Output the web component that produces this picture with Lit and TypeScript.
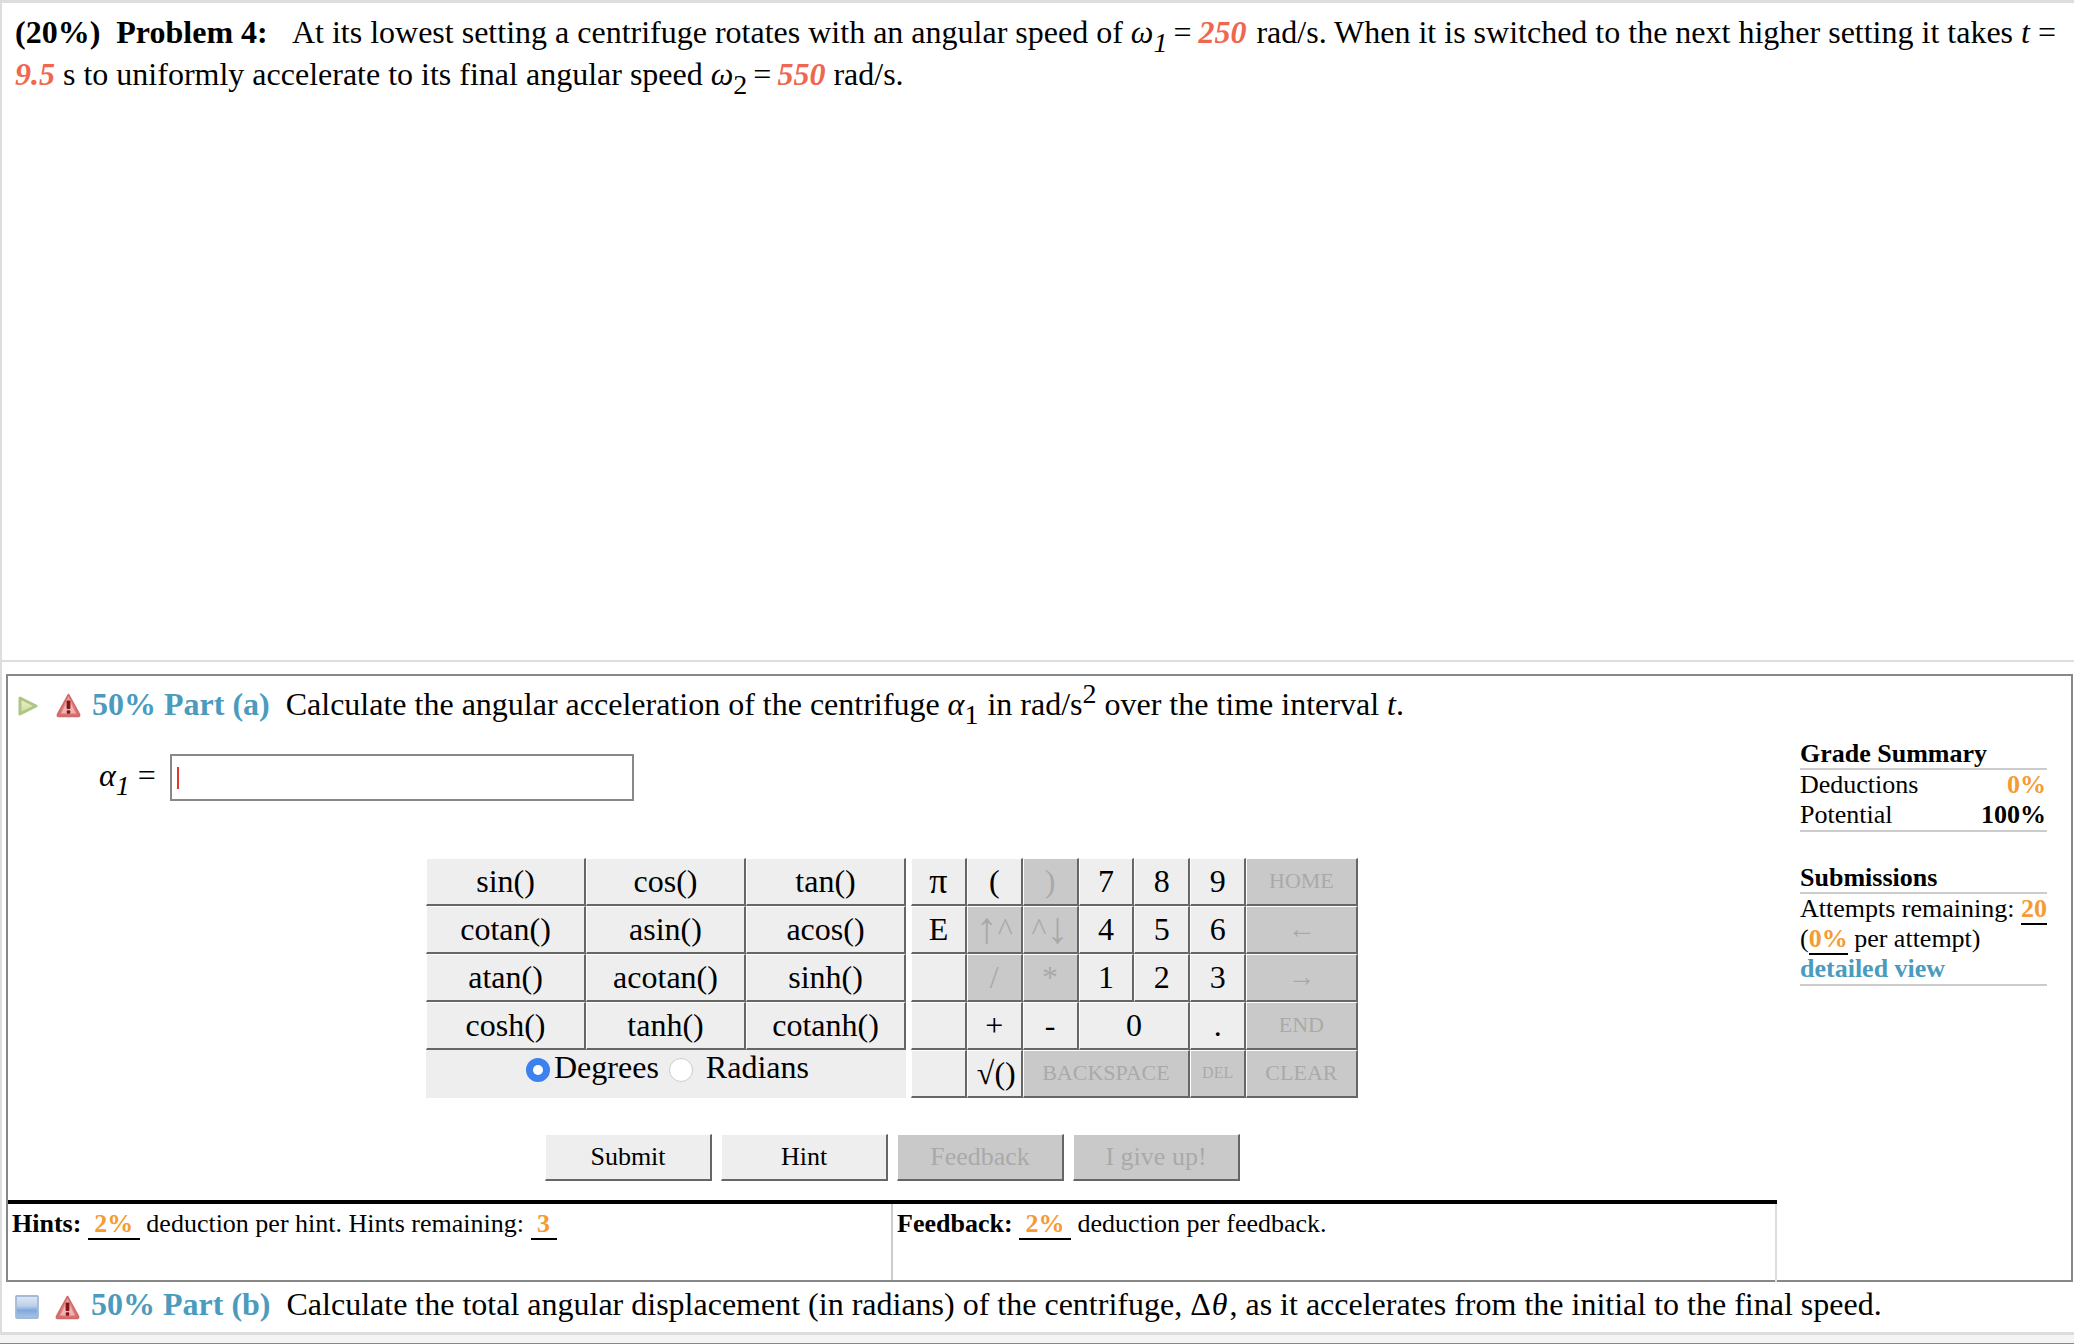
import { LitElement, html, css, svg } from "lit";
import { customElement } from "lit/decorators.js";

type Key = { t: string; off?: boolean; cls?: string };

const FN = ["sin()", "cos()", "tan()", "cotan()", "asin()", "acos()", "atan()", "acotan()", "sinh()", "cosh()", "tanh()", "cotanh()"];
const PAD: Key[] = [
  { t: "π", cls: "pi" }, { t: "(" }, { t: ")", off: true }, { t: "7" }, { t: "8" }, { t: "9" }, { t: "HOME", off: true, cls: "wide small" },
  { t: "E" }, { t: "↑^", off: true }, { t: "^↓", off: true }, { t: "4" }, { t: "5" }, { t: "6" }, { t: "←", off: true, cls: "wide arrow" },
  { t: "" }, { t: "/", off: true }, { t: "*", off: true }, { t: "1" }, { t: "2" }, { t: "3" }, { t: "→", off: true, cls: "wide arrow" },
  { t: "" }, { t: "+" }, { t: "-" }, { t: "0", cls: "wide" }, { t: "." }, { t: "END", off: true, cls: "wide small" },
  { t: "" }, { t: "√()", cls: "root" }, { t: "BACKSPACE", off: true, cls: "triple small" }, { t: "DEL", off: true, cls: "tiny" }, { t: "CLEAR", off: true, cls: "wide small" },
];

const warnIcon = svg`<svg class="ico warn" viewBox="0 0 25 25" width="25" height="25">
  <defs><linearGradient id="wg" x1="0" y1="0" x2="0" y2="1">
    <stop offset="0" stop-color="#f3a5a5"/><stop offset=".55" stop-color="#e88080"/><stop offset="1" stop-color="#d96a6a"/>
  </linearGradient></defs>
  <path d="M12.5 1.5 L23.5 21.5 Q24 23.5 22.5 23.5 L2.5 23.5 Q1 23.5 1.5 21.5 Z" fill="url(#wg)" stroke="#cf6a6a" stroke-width="1.6" stroke-linejoin="round"/>
  <path d="M12.5 6 L20 20.5 L5 20.5 Z" fill="#f4c0c0" opacity=".8"/>
  <rect x="10.6" y="7.5" width="3.8" height="8.5" rx="1" fill="#7f1616"/>
  <rect x="10.8" y="17.3" width="3.4" height="3.4" rx="1" fill="#7f1616"/>
</svg>`;

const playIcon = svg`<svg class="ico" viewBox="0 0 22 22" width="22" height="22">
  <defs><linearGradient id="pg" x1="0" y1="0" x2="0" y2="1">
    <stop offset="0" stop-color="#eef4d2"/><stop offset="1" stop-color="#c8dc94"/>
  </linearGradient></defs>
  <path d="M3 3 L19 11 L3 19 Z" fill="url(#pg)" stroke="#b0c585" stroke-width="3" stroke-linejoin="round"/>
</svg>`;

const minIcon = svg`<svg class="ico" viewBox="0 0 24 24" width="24" height="24">
  <defs><linearGradient id="mg" x1="0" y1="0" x2="0" y2="1">
    <stop offset="0" stop-color="#e0e9f4"/><stop offset=".45" stop-color="#bcd0ea"/><stop offset=".65" stop-color="#80a8dc"/><stop offset="1" stop-color="#a9c4e6"/>
  </linearGradient></defs>
  <rect x="1" y="1" width="22" height="22" rx="1" fill="url(#mg)" stroke="#a3bad6" stroke-width="1.8"/>
</svg>`;

const keyLabel = (t: string) =>
  t === "↑^" ? html`<span class="bigarrow">↑</span>^` : t === "^↓" ? html`^<span class="bigarrow">↓</span>` : t;

@customElement("app-root")
export class AppRoot extends LitElement {
  static styles = css`
    :host {
      display: block;
      width: 2074px;
      height: 1344px;
      overflow: hidden;
      background: #fff;
      color: #000;
      font-family: "Liberation Serif", serif;
      font-size: 32px;
    }
    .page { display: flex; flex-direction: column; height: 1344px; box-sizing: border-box; }
    .problem {
      box-sizing: border-box;
      height: 662px;
      border-top: 3px solid #ddd;
      border-left: 2px solid #ddd;
      border-bottom: 2px solid #ddd;
      padding: 8px 10px 0 13px;
      line-height: 42px;
    }
    .gap { margin-right: 18px; }
    .val { color: #f0674f; font-weight: bold; font-style: italic; }
    .val.first { margin: 0 2px 0 1px; }
    i { font-style: italic; }
    .sub { font-size: 28px; line-height: 0; vertical-align: -9px; margin-right: 1px; }
    .sup { font-size: 28px; line-height: 0; vertical-align: 12px; }
    .eq { margin: 0 6px 0 5px; }
    .lbl .eq { margin-left: 7px; }
    .theta { margin: 0 2px 0 1px; }
    .lower {
      flex: 1;
      display: flex;
      flex-direction: column;
      border-left: 2px solid #ddd;
      min-height: 0;
    }
    .part {
      box-sizing: border-box;
      height: 608px;
      margin: 12px 1px 0 4px;
      border: 2px solid #888;
      display: flex;
    }
    .main { width: 1769px; flex: none; display: flex; flex-direction: column; }
    .head { display: flex; align-items: center; height: 56px; white-space: nowrap; }
    .ico { flex: none; display: block; filter: blur(0.6px); }
    .play { margin: 4px 0 0 9px; width: 22px; display: block; }
    .warn { margin: 2px 11px 0 17px; }
    .title { color: #4a9bbd; font-weight: bold; margin-right: 16px; }
    .answer { display: flex; align-items: center; margin: 22px 0 0 91px; height: 47px; }
    .answer .lbl { width: 71px; flex: none; padding-bottom: 5px; white-space: nowrap; }
    .input {
      box-sizing: border-box;
      width: 464px;
      height: 47px;
      border: 2px solid #888;
      display: flex;
      align-items: center;
      padding-left: 5px;
    }
    .caret { width: 2px; height: 22px; background: #e0392b; }
    .calc { display: flex; gap: 5px; margin: 57px 0 0 418px; }
    .fn { display: grid; grid-template-columns: repeat(3, 160px); grid-auto-rows: 48px; width: 480px; }
    .keys { display: grid; grid-template-columns: repeat(8, 55.85px); grid-auto-rows: 48px; width: 447px; }
    .key {
      box-sizing: border-box;
      background: #eee;
      border-style: solid;
      border-color: #fff #666 #666 #fff;
      border-width: 1px 2px 2px 1px;
      padding-bottom: 2px;
      display: flex;
      align-items: center;
      justify-content: center;
      line-height: 1;
      white-space: nowrap;
    }
    .key.off { background: #c9c9c9; color: #a9a9a9; }
    .key.wide { grid-column: span 2; }
    .key.triple { grid-column: span 3; }
    .key.small { font-size: 22px; }
    .key.tiny { font-size: 16px; }
    .key.arrow { font-size: 28px; }
    .key.pi { font-size: 36px; }
    .key.root { padding-left: 4px; }
    .bigarrow { font-size: 44px; line-height: 32px; }
    .mode {
      grid-column: span 3;
      background: #eee;
      display: flex;
      align-items: flex-start;
      padding: 0 0 0 100px;
      line-height: 34px;
    }
    .radio { box-sizing: border-box; width: 24px; height: 24px; border-radius: 50%; flex: none; margin-top: 8px; }
    .radio.on { background: #3b82f0; border: 7px solid #3b82f0; }
    .radio.on::after { content: ""; display: block; width: 10px; height: 10px; border-radius: 50%; background: #fff; }
    .radio.none { background: #fff; border: 1px solid #ccc; margin-left: 10px; margin-right: 13px; }
    .degrees { margin-left: 4px; }
    .btns { display: flex; gap: 9px; margin: 36px 0 0 537px; }
    .btn {
      box-sizing: border-box;
      width: 167px;
      height: 47px;
      background: #eee;
      border-style: solid;
      border-color: #fff #666 #666 #fff;
      border-width: 1px 2px 2px 1px;
      display: flex;
      align-items: center;
      justify-content: center;
      font-size: 26px;
    }
    .btn.off { background: #c9c9c9; color: #a9a9a9; }
    .hints {
      margin-top: 19px;
      flex: 1;
      display: flex;
      border-top: 4px solid #000;
      font-size: 26px;
      line-height: 30px;
    }
    .cell { box-sizing: border-box; padding: 5px 0 0 4px; }
    .hint-cell { width: 885px; border-right: 2px solid #ccc; }
    .fb-cell { flex: 1; border-right: 2px solid #ddd; margin-bottom: -2px; }
    .num { color: #f59b33; font-weight: bold; }
    .ul { border-bottom: 2px solid #000; }
    .side { flex: 1; padding: 63px 0 0 23px; font-size: 26px; line-height: 30px; }
    .box { width: 247px; }
    .rule { border-bottom: 2px solid #ccc; }
    .heading { font-weight: bold; line-height: 29px; border-bottom: 2px solid #ccc; }
    .row { display: flex; justify-content: space-between; padding-right: 1px; }
    .strong { font-weight: bold; }
    .sec2 { margin-top: 31px; }
    .link { color: #4a9bbd; font-weight: bold; }
    .partb { display: flex; align-items: center; box-sizing: border-box; height: 50px; padding-bottom: 5px; white-space: nowrap; }
    .min { margin: 5px 0 0 13px; display: block; }
    .partb .warn { margin: 5px 11px 0 16px; }
    .footer {
      flex: none;
      height: 12px;
      box-sizing: border-box;
      margin-left: -2px;
      background: #f4f4f4;
      border-top: 3px solid #ddd;
      border-bottom: 1px solid #888;
    }
  `;

  render() {
    return html`
      <div class="page">
        <section class="problem">
          <b>(20%)&nbsp; <span class="gap">Problem 4:</span></b> At its lowest setting a centrifuge rotates with an angular speed of
          <i>ω</i><i class="sub">1</i><span class="eq">=</span><span class="val first">250</span> rad/s. When it is switched to the next higher setting it takes
          <i>t</i> = <span class="val">9.5</span> s to uniformly accelerate to its final angular speed
          <i>ω</i><span class="sub">2</span><span class="eq">=</span><span class="val">550</span> rad/s.
        </section>
        <div class="lower">
          <section class="part">
            <div class="main">
              <div class="head">
                <span class="play">${playIcon}</span>${warnIcon}
                <span class="title">50% Part (a)</span>
                <span>Calculate the angular acceleration of the centrifuge <i>α</i><span class="sub">1</span> in rad/s<span class="sup">2</span> over the time interval <i>t</i>.</span>
              </div>
              <div class="answer">
                <span class="lbl"><i>α</i><i class="sub">1</i><span class="eq">=</span></span>
                <div class="input"><div class="caret"></div></div>
              </div>
              <div class="calc">
                <div class="fn">
                  ${FN.map((t) => html`<div class="key">${t}</div>`)}
                  <div class="mode">
                    <span class="radio on"></span><span class="degrees">Degrees</span>
                    <span class="radio none"></span><span>Radians</span>
                  </div>
                </div>
                <div class="keys">
                  ${PAD.map((k) => html`<div class="key ${k.off ? "off" : ""} ${k.cls ?? ""}">${keyLabel(k.t)}</div>`)}
                </div>
              </div>
              <div class="btns">
                <div class="btn">Submit</div>
                <div class="btn">Hint</div>
                <div class="btn off">Feedback</div>
                <div class="btn off">I give up!</div>
              </div>
              <div class="hints">
                <div class="cell hint-cell"><b>Hints:</b> <span class="num ul">&nbsp;2%&nbsp;</span> deduction per hint. Hints remaining: <span class="num ul">&nbsp;3&nbsp;</span></div>
                <div class="cell fb-cell"><b>Feedback:</b> <span class="num ul">&nbsp;2%&nbsp;</span> deduction per feedback.</div>
              </div>
            </div>
            <aside class="side">
              <div class="box">
                <div class="heading">Grade Summary</div>
                <div class="row"><span>Deductions</span><span class="num">0%</span></div>
                <div class="row rule"><span>Potential</span><span class="strong">100%</span></div>
                <div class="heading sec2">Submissions</div>
                <div>Attempts remaining: <span class="num ul">20</span></div>
                <div>(<span class="num ul">0%</span> per attempt)</div>
                <div class="link rule">detailed view</div>
              </div>
            </aside>
          </section>
          <div class="partb">
            <span class="min">${minIcon}</span>${warnIcon}
            <span class="title">50% Part (b)</span>
            <span>Calculate the total angular displacement (in radians) of the centrifuge, Δ<i class="theta">θ</i>, as it accelerates from the initial to the final speed.</span>
          </div>
          <div class="footer"></div>
        </div>
      </div>
    `;
  }
}
